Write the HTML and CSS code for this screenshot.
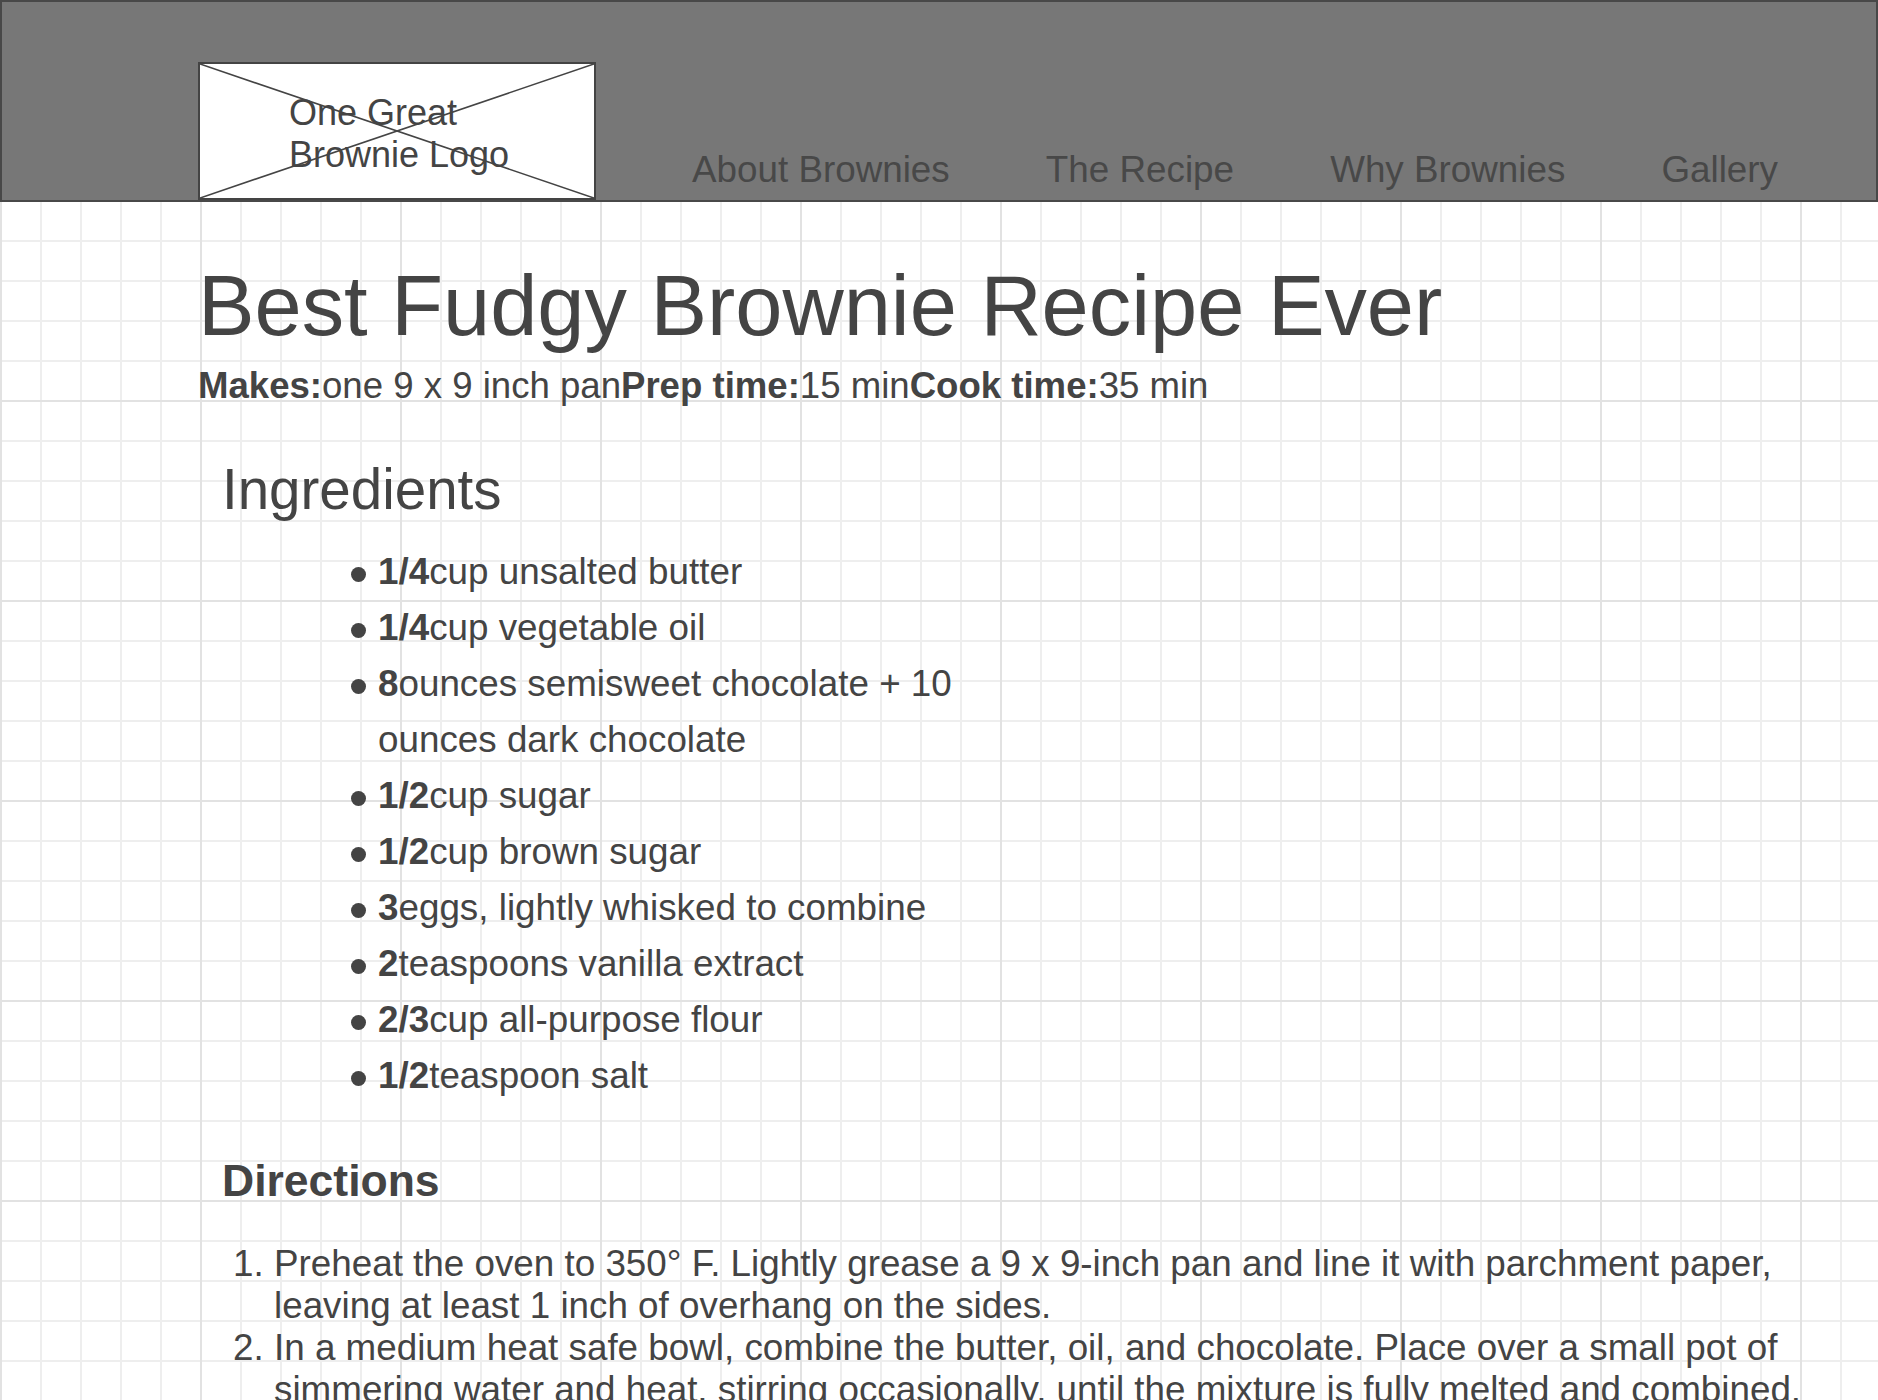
FILE: index.html
```html
<!DOCTYPE html>
<html lang="en">
<head>
<meta charset="utf-8">
<title>Best Fudgy Brownie Recipe Ever</title>
<link rel="stylesheet" href="styles.css">
</head>
<body>
<header class="site-header">
  <div class="logo">
    <svg class="logo-x" viewBox="0 0 100 100" preserveAspectRatio="none" aria-hidden="true">
      <line x1="0" y1="0" x2="100" y2="100" vector-effect="non-scaling-stroke"/>
      <line x1="100" y1="0" x2="0" y2="100" vector-effect="non-scaling-stroke"/>
    </svg>
    <div class="logo-text">One Great<br>Brownie Logo</div>
  </div>
  <nav class="nav">
    <a href="#about">About Brownies</a>
    <a href="#recipe">The Recipe</a>
    <a href="#why">Why Brownies</a>
    <a href="#gallery">Gallery</a>
  </nav>
</header>
<main class="content">
  <h1 class="title">Best Fudgy Brownie Recipe Ever</h1>
  <p class="meta"><strong>Makes:</strong>one 9 x 9 inch pan<strong>Prep time:</strong>15 min<strong>Cook time:</strong>35 min</p>

  <section class="ingredients">
    <h2 class="section-title">Ingredients</h2>
    <ul class="ingredient-list">
      <li><strong>1/4</strong>cup unsalted butter</li>
      <li><strong>1/4</strong>cup vegetable oil</li>
      <li><strong>8</strong>ounces semisweet chocolate + 10 ounces dark chocolate</li>
      <li><strong>1/2</strong>cup sugar</li>
      <li><strong>1/2</strong>cup brown sugar</li>
      <li><strong>3</strong>eggs, lightly whisked to combine</li>
      <li><strong>2</strong>teaspoons vanilla extract</li>
      <li><strong>2/3</strong>cup all-purpose flour</li>
      <li><strong>1/2</strong>teaspoon salt</li>
    </ul>
  </section>

  <section class="directions">
    <h3 class="sub-title">Directions</h3>
    <ol class="direction-list">
      <li>Preheat the oven to 350° F. Lightly grease a 9 x 9-inch pan and line it with parchment paper, leaving at least 1 inch of overhang on the sides.</li>
      <li>In a medium heat safe bowl, combine the butter, oil, and chocolate. Place over a small pot of simmering water and heat, stirring occasionally, until the mixture is fully melted and combined.</li>
      <li>Remove from the heat and whisk in the sugars. Add the eggs and vanilla and whisk until smooth.</li>
      <li>Fold in the flour and salt until just combined, then pour into the prepared pan.</li>
    </ol>
  </section>
</main>
</body>
</html>
```

FILE: styles.css
```css
html {
  background-color: #ffffff;
  background-image:
    linear-gradient(to right, #e2e2e2 2px, transparent 2px),
    linear-gradient(to bottom, #e2e2e2 2px, transparent 2px),
    linear-gradient(to right, #eeeeee 2px, transparent 2px),
    linear-gradient(to bottom, #eeeeee 2px, transparent 2px);
  background-size: 200px 200px, 200px 200px, 40px 40px, 40px 40px;
}

body {
  margin: 0;
  font-family: "Liberation Sans", Arial, sans-serif;
  color: #444444;
}

.site-header {
  display: flex;
  align-items: flex-end;
  height: 198px;
  padding: 0 98px 0 196px;
  background: #777777;
  border: 2px solid #484848;
}

.logo {
  position: relative;
  flex: none;
  box-sizing: border-box;
  width: 398px;
  height: 138px;
  border: 2px solid #444444;
  background: #ffffff;
  display: flex;
  align-items: center;
  justify-content: center;
  padding: 5px 0 0 4px;
}

.logo-x {
  position: absolute;
  inset: 0;
  width: 100%;
  height: 100%;
}

.logo-x line {
  stroke: #444444;
  stroke-width: 1.6;
}

.logo-text {
  position: relative;
  font-size: 36px;
  line-height: 42px;
  color: #444444;
}

.nav {
  flex: 1;
  display: flex;
  justify-content: space-between;
  margin-left: 96px;
  padding-bottom: 10px;
  font-size: 36.8px;
  line-height: 41px;
}

.nav a {
  color: #484848;
  text-decoration: none;
}

.content {
  padding: 0 40px 0 198px;
}

.title {
  margin: 56px 0 0;
  font-size: 84.8px;
  font-weight: 400;
  line-height: 96px;
}

.meta {
  margin: 11px 0 0;
  font-size: 36.6px;
  line-height: 41px;
}

.ingredients,
.directions {
  padding-left: 24px;
  margin-top: 52px;
}

.section-title {
  margin: 0;
  font-size: 56.5px;
  font-weight: 400;
  line-height: 64px;
}

.ingredient-list {
  margin: 22px 0 0;
  padding-left: 156px;
  width: 640px;
  list-style: none;
  font-size: 36.8px;
  line-height: 56px;
}

.ingredient-list li::before {
  content: "";
  display: inline-block;
  width: 15px;
  height: 15px;
  margin: 0 12px 0 -27px;
  border-radius: 50%;
  background: #444444;
  vertical-align: 2px;
}

.sub-title {
  margin: 0;
  font-size: 44.5px;
  font-weight: 700;
  line-height: 50px;
}

.direction-list {
  margin: 37px 0 0;
  padding-left: 52px;
  font-size: 36.8px;
  line-height: 42px;
}
```
